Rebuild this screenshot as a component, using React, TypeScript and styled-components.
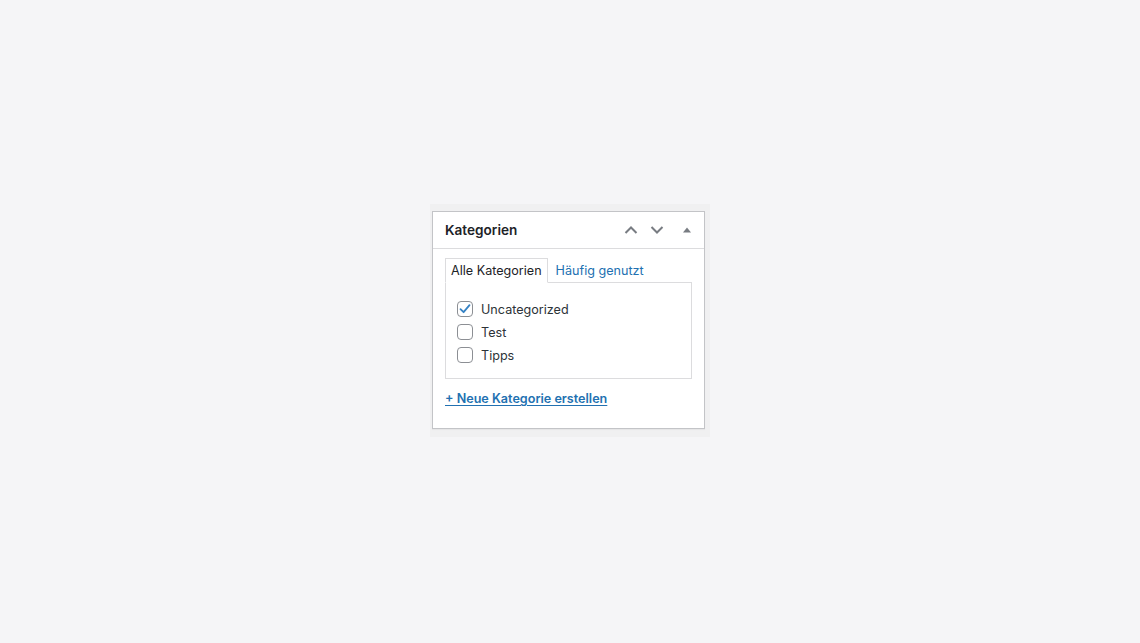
import styled, { createGlobalStyle } from "styled-components";

const Global = createGlobalStyle`
  html, body {
    margin: 0;
    padding: 0;
    background: #f5f5f7;
    font-family: Inter, "Open Sans", sans-serif;
    color: #1d2327;
  }
`;

const Page = styled.div`
  width: 1140px;
  height: 643px;
  display: flex;
  justify-content: center;
  padding-top: 204px;
  box-sizing: border-box;
`;

const Frame = styled.div`
  width: 280px;
  height: 233px;
  background: #f0f0f1;
  padding: 7px 5px 8px 2px;
  box-sizing: border-box;
`;

const Panel = styled.div`
  background: #fff;
  border: 1px solid #c3c4c7;
  box-shadow: 0 1px 1px rgba(0, 0, 0, 0.04);
  height: 218px;
  box-sizing: border-box;
`;

const Header = styled.div`
  height: 36px;
  display: flex;
  align-items: center;
  padding: 0 12px;
  border-bottom: 1px solid #dcdcde;
`;

const Title = styled.h2`
  flex: 1;
  margin: 0;
  font-size: 13.6px;
  font-weight: 600;
  color: #1d2327;
`;

const IconButton = styled.button<{ $toggle?: boolean }>`
  width: 26px;
  height: 26px;
  display: flex;
  align-items: center;
  justify-content: center;
  border: none;
  background: none;
  padding: 0;
  color: #787c82;
  cursor: pointer;
  ${(p) => (p.$toggle ? "margin-left: 4px; margin-right: -8px;" : "")}
`;

const Inside = styled.div`
  padding: 8px 12px 0 12px;
`;

const Tabs = styled.div`
  display: flex;
  align-items: flex-end;
  height: 25px;
`;

const Tab = styled.div<{ $active?: boolean }>`
  height: 25px;
  box-sizing: border-box;
  padding: 0 5px;
  display: flex;
  align-items: center;
  font-size: 12.6px;
  margin-bottom: -1px;
  position: relative;
  ${(p) =>
    p.$active
      ? `border: 1px solid #dcdcde; border-bottom-color: #fff; background: #fff; color: #1d2327;`
      : `color: #2271b1; padding-left: 8px;`}
`;

const TabPanel = styled.div`
  border: 1px solid #dcdcde;
  height: 97px;
  box-sizing: border-box;
  padding: 18px 11px 0 11px;
  display: flex;
  flex-direction: column;
  gap: 7px;
`;

const Row = styled.label`
  display: flex;
  align-items: center;
  gap: 8px;
  font-size: 12.6px;
  color: #2c3338;
  height: 16px;
`;

const Box = styled.span`
  width: 16px;
  height: 16px;
  box-sizing: border-box;
  border: 1px solid #8c8f94;
  border-radius: 4px;
  background: #fff;
  display: flex;
  align-items: center;
  justify-content: center;
`;

const AddLink = styled.a`
  display: inline-block;
  margin-top: 12px;
  font-size: 12.6px;
  font-weight: 600;
  color: #2271b1;
  text-decoration: underline;
  text-underline-offset: 2px;
`;

const Check = () => (
  <svg width="14" height="14" viewBox="0 0 14 14">
    <path d="M2.5 7.2 L5.6 10.2 L11.5 3.2" fill="none" stroke="#3582c4" strokeWidth="1.8" strokeLinecap="round" strokeLinejoin="round" />
  </svg>
);

const items = [
  { label: "Uncategorized", checked: true },
  { label: "Test", checked: false },
  { label: "Tipps", checked: false },
];

export default function App() {
  return (
    <>
      <Global />
      <Page>
        <Frame>
          <Panel>
            <Header>
              <Title>Kategorien</Title>
              <IconButton aria-label="nach oben">
                <svg width="14" height="10" viewBox="0 0 14 10">
                  <path d="M1.5 8 L7 2.5 L12.5 8" fill="none" stroke="#787c82" strokeWidth="2" />
                </svg>
              </IconButton>
              <IconButton aria-label="nach unten">
                <svg width="14" height="10" viewBox="0 0 14 10">
                  <path d="M1.5 2 L7 7.5 L12.5 2" fill="none" stroke="#787c82" strokeWidth="2" />
                </svg>
              </IconButton>
              <IconButton $toggle aria-label="umschalten">
                <svg width="10" height="8" viewBox="0 0 10 8">
                  <path d="M1 6.5 L5 1.5 L9 6.5 Z" fill="#787c82" />
                </svg>
              </IconButton>
            </Header>
            <Inside>
              <Tabs>
                <Tab $active>Alle Kategorien</Tab>
                <Tab>Häufig genutzt</Tab>
              </Tabs>
              <TabPanel>
                {items.map((it) => (
                  <Row key={it.label}>
                    <Box>{it.checked && <Check />}</Box>
                    {it.label}
                  </Row>
                ))}
              </TabPanel>
              <AddLink href="#">+ Neue Kategorie erstellen</AddLink>
            </Inside>
          </Panel>
        </Frame>
      </Page>
    </>
  );
}
